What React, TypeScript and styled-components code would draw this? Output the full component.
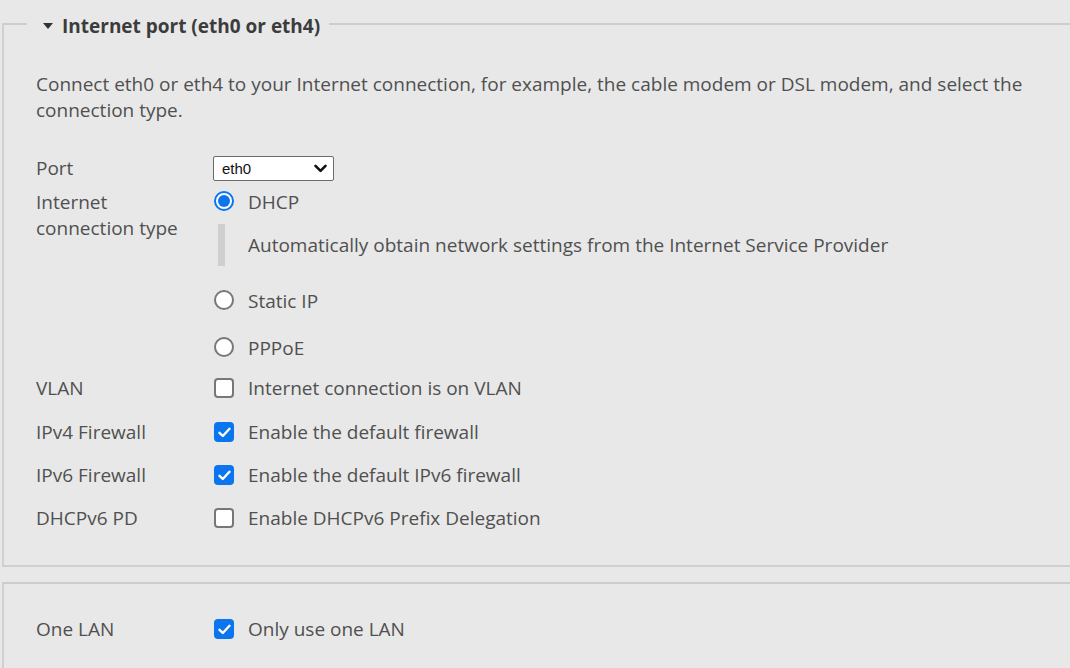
import React from "react";
import styled, { createGlobalStyle } from "styled-components";

const Global = createGlobalStyle`
  html, body { margin: 0; padding: 0; background: #e8e8e8; overflow: hidden; }
  body { font-family: "Open Sans", "Noto Sans", sans-serif; color: #505050; }
`;

const Page = styled.div`
  width: 1140px;
  padding: 9px 0 0 2px;
  display: flex;
  flex-direction: column;
  gap: 15px;
`;

const Fieldset = styled.fieldset<{ $top: number; $bottom: number }>`
  margin: 0;
  border: 2px solid #d0d0d0;
  border-top-color: #cdcdcd;
  padding: ${(p) => p.$top}px 32px ${(p) => p.$bottom}px 32px;
  min-width: 0;
`;

const Legend = styled.legend`
  margin-left: -9px;
  padding: 4px 9px 0 16px;
  display: flex;
  align-items: center;
  gap: 9px;
  font-weight: 700;
  font-size: 19px;
  line-height: 26px;
  color: #3c3c3c;
`;

const Caret = styled.span`
  width: 0;
  height: 0;
  border-left: 5px solid transparent;
  border-right: 5px solid transparent;
  border-top: 6px solid #333;
`;

const Intro = styled.p`
  margin: 0 0 32px 0;
  font-size: 19px;
  line-height: 26px;
`;

const Row = styled.div<{ $mt?: number }>`
  display: grid;
  grid-template-columns: 177px 1fr;
  margin-top: ${(p) => p.$mt ?? 0}px;
  font-size: 19px;
  line-height: 26px;
`;

const Label = styled.div<{ $center?: boolean }>`
  align-self: ${(p) => (p.$center ? "center" : "start")};
`;

const Controls = styled.div`
  display: flex;
  flex-direction: column;
`;

const SelectBox = styled.div`
  box-sizing: border-box;
  width: 121px;
  height: 25px;
  margin-top: 1px;
  border: 1px solid #6b6b6b;
  border-radius: 2px;
  background: #fff;
  display: flex;
  align-items: center;
  justify-content: space-between;
  padding: 0 6px 0 8px;
  font-family: "Liberation Sans", Arial, sans-serif;
  font-size: 15px;
  color: #111;
`;

const Option = styled.label<{ $mt?: number }>`
  display: flex;
  align-items: center;
  gap: 14px;
  height: 26px;
  margin-top: ${(p) => p.$mt ?? 0}px;
  padding-left: 1px;
`;

const Radio = styled.span<{ $on?: boolean }>`
  width: 20px;
  height: 20px;
  box-sizing: border-box;
  border-radius: 50%;
  border: 2px solid ${(p) => (p.$on ? "#0b75f0" : "#777")};
  background: #fff;
  display: flex;
  align-items: center;
  justify-content: center;
  margin-top: -3px;
  &::after {
    content: "";
    width: 12px;
    height: 12px;
    border-radius: 50%;
    background: ${(p) => (p.$on ? "#0b75f0" : "transparent")};
  }
`;

const Check = styled.span<{ $on?: boolean }>`
  width: 20px;
  height: 20px;
  box-sizing: border-box;
  border-radius: 4px;
  border: ${(p) => (p.$on ? "none" : "2px solid #777")};
  background: ${(p) => (p.$on ? "#0b75f0" : "#fff")};
  display: flex;
  align-items: center;
  justify-content: center;
`;

const Hint = styled.div`
  margin: 9px 0 0 5px;
  border-left: 7px solid #cfcfcf;
  height: 42px;
  display: flex;
  align-items: center;
  padding-left: 23px;
`;

const Tick = () => (
  <svg width="13" height="11" viewBox="0 0 13 11">
    <path d="M1.5 5.8 L4.8 9 L11.5 1.8" fill="none" stroke="#fff" strokeWidth="2.4" strokeLinecap="round" strokeLinejoin="round" />
  </svg>
);

const Chevron = () => (
  <svg width="13" height="9" viewBox="0 0 13 9">
    <path d="M1.5 1.8 L6.5 6.8 L11.5 1.8" fill="none" stroke="#111" strokeWidth="2.6" strokeLinecap="round" strokeLinejoin="round" />
  </svg>
);

const CheckRow = ({ label, text, on, mt }: { label: string; text: string; on?: boolean; mt: number }) => (
  <Row $mt={mt}>
    <Label>{label}</Label>
    <Controls>
      <Option>
        <Check $on={on}>{on && <Tick />}</Check>
        {text}
      </Option>
    </Controls>
  </Row>
);

export default function App() {
  return (
    <>
      <Global />
      <Page>
        <Fieldset $top={32} $bottom={34}>
          <Legend>
            <Caret />
            Internet port (eth0 or eth4)
          </Legend>
          <Intro>
            Connect eth0 or eth4 to your Internet connection, for example, the cable modem or DSL modem, and select the
            connection type.
          </Intro>
          <Row>
            <Label $center>Port</Label>
            <Controls>
              <SelectBox>
                eth0
                <Chevron />
              </SelectBox>
            </Controls>
          </Row>
          <Row $mt={8}>
            <Label>
              Internet
              <br />
              connection type
            </Label>
            <Controls>
              <Option>
                <Radio $on />
                DHCP
              </Option>
              <Hint>Automatically obtain network settings from the Internet Service Provider</Hint>
              <Option $mt={22}>
                <Radio />
                Static IP
              </Option>
              <Option $mt={21}>
                <Radio />
                PPPoE
              </Option>
            </Controls>
          </Row>
          <CheckRow mt={14} label="VLAN" text="Internet connection is on VLAN" />
          <CheckRow mt={18} label="IPv4 Firewall" text="Enable the default firewall" on />
          <CheckRow mt={17} label="IPv6 Firewall" text="Enable the default IPv6 firewall" on />
          <CheckRow mt={17} label="DHCPv6 PD" text="Enable DHCPv6 Prefix Delegation" />
        </Fieldset>
        <Fieldset $top={32} $bottom={30}>
          <CheckRow mt={0} label="One LAN" text="Only use one LAN" on />
        </Fieldset>
      </Page>
    </>
  );
}
